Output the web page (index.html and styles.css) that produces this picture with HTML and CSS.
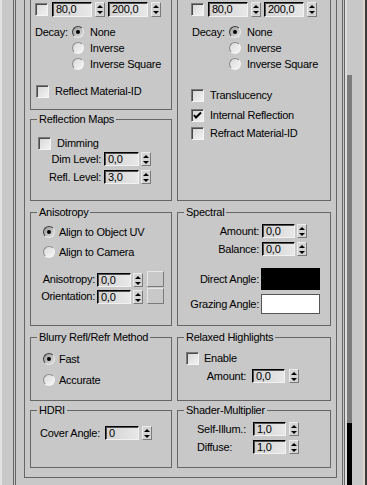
FILE: index.html
```html
<!DOCTYPE html>
<html lang="en">
<head>
    <meta charset="UTF-8">
    <meta name="viewport" content="width=device-width, initial-scale=1.0">
    <title>Material Options</title>
    <link rel="stylesheet" href="styles.css">
</head>
<body>

<div class="panel">
    <div class="rollout">
        <div class="options">
            <div class="cols">

                <!-- left column, first row -->
                <div class="stack">
                    <fieldset class="grp cut g-fog">
                        <div class="row h15 mt2">
                            <span class="chk ml4"></span>
                            <span class="edit w40 tall ml4">80,0</span><span class="spin tall ml3"><i class="up"></i><i class="dn"></i></span>
                            <span class="edit w40 tall ml3">200,0</span><span class="spin tall ml3"><i class="up"></i><i class="dn"></i></span>
                        </div>
                        <div class="row h16 mt7">
                            <span class="lbl decay ml4">Decay:</span><span class="rad on"></span><span class="ml6">None</span>
                        </div>
                        <div class="row h16 sub-l"><span class="rad"></span><span class="ml6">Inverse</span></div>
                        <div class="row h16 sub-l"><span class="rad"></span><span class="ml6">Inverse Square</span></div>
                        <div class="row h15 mt12">
                            <span class="chk ml5"></span><span class="ml6">Reflect Material-ID</span>
                        </div>
                    </fieldset>

                    <fieldset class="grp g-maps">
                        <legend>Reflection Maps</legend>
                        <div class="row h15 mt10">
                            <span class="chk ml7"></span><span class="ml6">Dimming</span>
                        </div>
                        <div class="row h14 mt1">
                            <span class="lbl-r w70">Dim Level:</span>
                            <span class="edit w35 ml3">0,0</span><span class="spin ml2"><i class="up"></i><i class="dn"></i></span>
                        </div>
                        <div class="row h14 mt4">
                            <span class="lbl-r w70">Refl. Level:</span>
                            <span class="edit w35 ml3">3,0</span><span class="spin ml2"><i class="up"></i><i class="dn"></i></span>
                        </div>
                    </fieldset>
                </div>

                <!-- right column, first row -->
                <fieldset class="grp cut g-trans">
                    <div class="row h15 mt2">
                        <span class="chk ml13"></span>
                        <span class="edit w40 tall ml4">80,0</span><span class="spin tall ml3"><i class="up"></i><i class="dn"></i></span>
                        <span class="edit w40 tall ml3">200,0</span><span class="spin tall ml3"><i class="up"></i><i class="dn"></i></span>
                    </div>
                    <div class="row h16 mt7">
                        <span class="lbl decay ml14">Decay:</span><span class="rad on"></span><span class="ml6">None</span>
                    </div>
                    <div class="row h16 sub-r"><span class="rad"></span><span class="ml6">Inverse</span></div>
                    <div class="row h16 sub-r"><span class="rad"></span><span class="ml6">Inverse Square</span></div>
                    <div class="row h15 mt16">
                        <span class="chk ml13"></span><span class="ml6">Translucency</span>
                    </div>
                    <div class="row h15 mt5">
                        <span class="chk on ml13"><svg width="11" height="11" viewBox="0 0 11 11"><polyline points="2,5 4,7.5 9,2.5" fill="none" stroke="#000" stroke-width="2"/></svg></span><span class="ml6">Internal Reflection</span>
                    </div>
                    <div class="row h15 mt3">
                        <span class="chk ml13"></span><span class="ml6">Refract Material-ID</span>
                    </div>
                </fieldset>

                <fieldset class="grp g-mid">
                    <legend>Anisotropy</legend>
                    <div class="row h16 mt5"><span class="rad on ml12"></span><span class="ml4">Align to Object UV</span></div>
                    <div class="row h16 mt4"><span class="rad ml12"></span><span class="ml4">Align to Camera</span></div>
                    <div class="row h16 mt11 end">
                        <span class="lbl-r w64 self-c">Anisotropy:</span>
                        <span class="edit w34 ml2">0,0</span><span class="spin ml2"><i class="up"></i><i class="dn"></i></span>
                        <span class="map ml4"></span>
                    </div>
                    <div class="row h16 mt1 end">
                        <span class="lbl-r w64 self-c">Orientation:</span>
                        <span class="edit w34 ml2">0,0</span><span class="spin ml2"><i class="up"></i><i class="dn"></i></span>
                        <span class="map ml4"></span>
                    </div>
                </fieldset>

                <fieldset class="grp g-mid">
                    <legend>Spectral</legend>
                    <div class="row h14 mt5">
                        <span class="lbl-r w81">Amount:</span>
                        <span class="edit w33 ml3">0,0</span><span class="spin ml2"><i class="up"></i><i class="dn"></i></span>
                    </div>
                    <div class="row h14 mt4">
                        <span class="lbl-r w81">Balance:</span>
                        <span class="edit w33 ml3">0,0</span><span class="spin ml2"><i class="up"></i><i class="dn"></i></span>
                    </div>
                    <div class="row h22 mt12">
                        <span class="lbl-r w81">Direct Angle:</span>
                        <span class="swatch black ml2"></span>
                    </div>
                    <div class="row h20 mt4">
                        <span class="lbl-r w81">Grazing Angle:</span>
                        <span class="swatch white ml2"></span>
                    </div>
                </fieldset>

                <fieldset class="grp g-low">
                    <legend>Blurry Refl/Refr Method</legend>
                    <div class="row h16 mt7"><span class="rad on ml12"></span><span class="ml4">Fast</span></div>
                    <div class="row h16 mt5"><span class="rad ml12"></span><span class="ml4">Accurate</span></div>
                </fieldset>

                <fieldset class="grp g-low">
                    <legend>Relaxed Highlights</legend>
                    <div class="row h15 mt7"><span class="chk ml8"></span><span class="ml5">Enable</span></div>
                    <div class="row h14 mt3">
                        <span class="lbl-r w68">Amount:</span>
                        <span class="edit w33 ml6">0,0</span><span class="spin ml4"><i class="up"></i><i class="dn"></i></span>
                    </div>
                </fieldset>

                <fieldset class="grp g-last">
                    <legend>HDRI</legend>
                    <div class="row h14 mt9">
                        <span class="lbl w64 ml9">Cover Angle:</span>
                        <span class="edit w34 ml1">0</span><span class="spin ml3"><i class="up"></i><i class="dn"></i></span>
                    </div>
                </fieldset>

                <fieldset class="grp g-last">
                    <legend>Shader-Multiplier</legend>
                    <div class="row h14 mt5">
                        <span class="lbl w55 ml19">Self-Illum.:</span>
                        <span class="edit w33 ml1">1,0</span><span class="spin ml3"><i class="up"></i><i class="dn"></i></span>
                    </div>
                    <div class="row h14 mt4">
                        <span class="lbl w55 ml19">Diffuse:</span>
                        <span class="edit w33 ml1">1,0</span><span class="spin ml3"><i class="up"></i><i class="dn"></i></span>
                    </div>
                </fieldset>

            </div>
        </div>
    </div>

    <div class="scroll-wrap">
        <div class="scroll"><div class="thumb"></div></div>
    </div>
</div>

</body>
</html>
```

FILE: styles.css
```css
* {
    box-sizing: border-box;
}

html,
body {
    height: 485px;
}

body {
    margin: 0;
    background-color: #c8c8c8;
    font-family: "Liberation Sans", Arial, sans-serif;
    font-size: 11px;
    line-height: 13px;
    letter-spacing: -0.25px;
    color: #000;
    overflow: hidden;
}

/* outer frame of the command panel */
.panel {
    display: flex;
    width: 367px;
    height: 485px;
    overflow: hidden;
    border-left: 2px solid #e2e2e2;
    border-right: 2px solid #3c3c3c;
    padding-left: 11px;
}

.rollout {
    width: 332px;
    height: 485px;
    border-left: 3px double #666;
    border-right: 3px double #666;
}

.options {
    height: 478px;
    margin: 0 5px 0 8px;
    padding: 0 5px;
    border: 1px solid #666;
    border-top: none;
}

.cols {
    display: grid;
    grid-template-columns: 142px 154px;
    column-gap: 5px;
    align-items: start;
}

/* scroll indicator at the right */
.scroll-wrap {
    width: 20px;
    height: 485px;
    border-left: 2px solid #dcdcdc;
    border-right: 2px solid #dad6ce;
    padding-right: 11px;
}
.scroll {
    width: 5px;
    height: 485px;
    background-color: #000;
}
.thumb {
    margin-top: 75px;
    height: 348px;
    background-color: #7c7c7c;
}

/* group boxes */
.grp {
    margin: 0;
    padding: 0;
    min-width: 0;
    border: 1px solid #666;
}
.grp legend {
    margin-left: 6px;
    padding: 0 2px;
    height: 13px;
    line-height: 13px;
}
.cut {
    border-top: none;
}
.g-fog {
    height: 110px;
}
.g-maps {
    margin-top: 3px;
    height: 88px;
}
.g-trans {
    height: 201px;
}
.g-mid {
    margin-top: 5px;
    height: 120px;
}
.g-low {
    margin-top: 5px;
    height: 70px;
}
.g-last {
    margin-top: 3px;
    height: 64px;
}

/* rows */
.row {
    display: flex;
    align-items: center;
    white-space: nowrap;
}
.row.end {
    align-items: flex-end;
}
.self-c {
    align-self: center;
}
.h14 { height: 14px; }
.h15 { height: 15px; }
.h16 { height: 16px; }
.h20 { height: 20px; }
.h22 { height: 22px; }

.sub-l { padding-left: 41px; }
.sub-r { padding-left: 51px; }

.mt1 { margin-top: 1px; }
.mt2 { margin-top: 2px; }
.mt3 { margin-top: 3px; }
.mt4 { margin-top: 4px; }
.mt5 { margin-top: 5px; }
.mt7 { margin-top: 7px; }
.mt9 { margin-top: 9px; }
.mt10 { margin-top: 10px; }
.mt11 { margin-top: 11px; }
.mt12 { margin-top: 12px; }
.mt16 { margin-top: 16px; }

.ml1 { margin-left: 1px; }
.ml2 { margin-left: 2px; }
.ml3 { margin-left: 3px; }
.ml4 { margin-left: 4px; }
.ml5 { margin-left: 5px; }
.ml6 { margin-left: 6px; }
.ml7 { margin-left: 7px; }
.ml8 { margin-left: 8px; }
.ml9 { margin-left: 9px; }
.ml12 { margin-left: 12px; }
.ml13 { margin-left: 13px; }
.ml14 { margin-left: 14px; }
.ml19 { margin-left: 19px; }

/* labels */
.lbl {
    display: inline-block;
}
.lbl.decay {
    width: 37px;
}
.lbl-r {
    display: inline-block;
    text-align: right;
}
.w55 { width: 55px; }
.w64 { width: 64px; }
.w68 { width: 68px; }
.w70 { width: 70px; }
.w81 { width: 81px; }

/* checkbox */
.chk {
    display: inline-block;
    flex: none;
    width: 13px;
    height: 13px;
    border: 1px solid;
    border-color: #7a7a7a #f4f4f4 #f4f4f4 #7a7a7a;
    box-shadow: inset 1px 1px 0 #4a4a4a;
    background: linear-gradient(135deg, #d6d6d6, #f2f2f2);
}
.chk svg {
    display: block;
    margin: 0;
}

/* radio */
.rad {
    display: inline-block;
    flex: none;
    position: relative;
    width: 12px;
    height: 12px;
    border-radius: 50%;
    border: 1px solid;
    border-color: #8a8a8a #f4f4f4 #f4f4f4 #8a8a8a;
    background: linear-gradient(135deg, #dadada, #f6f6f6);
}
.rad.on {
    border-color: #3a3a3a #e8e8e8 #e8e8e8 #3a3a3a;
    background: linear-gradient(135deg, #9a9a9a, #e0e0e0);
}
.rad.on::after {
    content: "";
    position: absolute;
    left: 3px;
    top: 3px;
    width: 4px;
    height: 4px;
    border-radius: 50%;
    background-color: #000;
}

/* numeric field */
.edit {
    display: inline-block;
    flex: none;
    height: 14px;
    line-height: 12px;
    padding-left: 3px;
    border: 1px solid;
    border-color: #000 #f2f2f2 #f2f2f2 #000;
    box-shadow: inset 1px 1px 0 #505050;
    background: linear-gradient(to right, #d2d2d2, #e8e8e8);
}
.edit.tall {
    height: 15px;
    line-height: 13px;
}
.w33 { width: 33px; }
.w34 { width: 34px; }
.w35 { width: 35px; }
.w40 { width: 40px; }

/* spinner arrows */
.spin {
    display: inline-flex;
    flex: none;
    flex-direction: column;
    justify-content: space-around;
    align-items: center;
    width: 10px;
    height: 14px;
    border: 1px solid;
    border-color: #ececec #7a7a7a #7a7a7a #ececec;
    background-color: #d4d4d4;
}
.spin.tall {
    height: 15px;
}
.spin .up,
.spin .dn {
    display: block;
    width: 0;
    height: 0;
    border-left: 3px solid transparent;
    border-right: 3px solid transparent;
}
.spin .up {
    border-bottom: 3px solid #000;
}
.spin .dn {
    border-top: 3px solid #000;
}

/* map button */
.map {
    display: inline-block;
    flex: none;
    width: 17px;
    height: 16px;
    border: 1px solid;
    border-color: #e6e6e6 #7a7a7a #7a7a7a #e6e6e6;
    background-color: #c8c8c8;
}

/* colour swatches */
.swatch {
    display: inline-block;
    flex: none;
    width: 59px;
}
.swatch.black {
    height: 22px;
    background-color: #000;
}
.swatch.white {
    height: 20px;
    background-color: #fff;
    border: 1px solid #555;
}
```
